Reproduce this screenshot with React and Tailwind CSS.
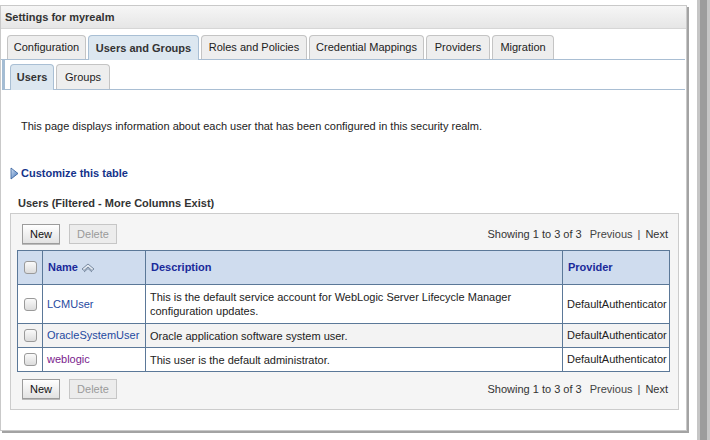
import React from "react";

const F = { fontFamily: '"Liberation Sans", Arial, sans-serif' };

function Tab({ label, selected, w, h }) {
  return (
    <div
      className={
        "flex items-center justify-center rounded-t-[4px] border border-b-0 text-[11px] " +
        (selected
          ? "bg-[#dce7f0] border-[#a9bfd4] font-bold text-[#333] -mb-px"
          : "bg-[#eeeeee] border-[#c4c4c4] text-[#222]")
      }
      style={{ width: w, height: selected ? h + 1 : h }}
    >
      {label}
    </div>
  );
}

function CheckBox() {
  return (
    <div className="w-[13px] h-[13px] rounded-[3px] border border-[#9a9a9a] bg-gradient-to-b from-[#fafafa] to-[#dcdcdc]" />
  );
}

function Btn({ label, disabled, w }) {
  return (
    <div
      className={
        "h-[20px] flex items-center justify-center text-[11px] border " +
        (disabled
          ? "bg-[#ececec] border-[#c6c6c6] text-[#9a9a9a]"
          : "bg-gradient-to-b from-[#ffffff] to-[#e2e2e2] border-[#9c9c9c] text-[#111] shadow-[0_1px_0_#bbb]")
      }
      style={{ width: w }}
    >
      {label}
    </div>
  );
}

function Toolbar() {
  return (
    <div className="flex items-center justify-between h-[20px] pl-[11px] pr-[10px]">
      <div className="flex gap-[9px]">
        <Btn label="New" w={38} />
        <Btn label="Delete" disabled w={48} />
      </div>
      <div className="text-[11px] text-[#333] flex items-center">
        <span>Showing 1 to 3 of 3</span>
        <span className="ml-[8px] text-[#444]">Previous</span>
        <span className="mx-[5px] text-[#444]">|</span>
        <span>Next</span>
      </div>
    </div>
  );
}

function SortIcon() {
  return (
    <svg width="14" height="10" viewBox="0 0 14 10" className="ml-[3px]">
      <path d="M1 6 L7 1 L13 6 L11 7.5 L7 4 L3 7.5 Z" fill="#e4eaf2" stroke="#6d7f96" strokeWidth="0.9" />
      <path d="M3 9 L7 5.5 L11 9" fill="none" stroke="#6d7f96" strokeWidth="0.9" />
    </svg>
  );
}

export default function App() {
  const rows = [
    {
      name: "LCMUser",
      desc: ["This is the default service account for WebLogic Server Lifecycle Manager", "configuration updates."],
      h: 39,
      bg: "bg-white",
      color: "text-[#1f4aa0]",
    },
    { name: "OracleSystemUser", desc: ["Oracle application software system user."], h: 24, bg: "bg-[#f3f3f3]", color: "text-[#1f4aa0]" },
    { name: "weblogic", desc: ["This user is the default administrator."], h: 24, bg: "bg-white", color: "text-[#7a1c8c]" },
  ];
  return (
    <div className="w-[710px] h-[440px] bg-white flex relative overflow-hidden" style={F}>
      <div className="mt-[5px] w-[687px] h-[426px] border border-[#c9c9c9] shadow-[2px_2px_0_#a3a3a3] bg-white flex flex-col">
        <div className="h-[23px] shrink-0 bg-gradient-to-b from-[#f6f6f6] to-[#e6e6e6] border-b border-[#d6d6d6] flex items-center pl-[4px] text-[11px] font-bold text-[#333]">
          Settings for myrealm
        </div>
        <div className="pt-[6px] pl-[6px] flex gap-[2px] items-end border-b border-[#a9bed3] mr-[1px]">
          <Tab label="Configuration" w={79} h={24} />
          <Tab label="Users and Groups" selected w={111} h={24} />
          <Tab label="Roles and Policies" w={106} h={24} />
          <Tab label="Credential Mappings" w={115} h={24} />
          <Tab label="Providers" w={64} h={24} />
          <Tab label="Migration" w={62} h={24} />
        </div>
        <div className="flex">
          <div className="ml-[1px] w-[3px] bg-[#a4bcd3]" />
          <div className="flex-1 pt-[4px] pl-[5px] flex gap-[2px] items-end border-b border-[#a9bed3] mr-[1px]">
            <Tab label="Users" selected w={44} h={25} />
            <Tab label="Groups" w={54} h={25} />
          </div>
        </div>
        <div className="mt-[30px] pl-[20px] text-[11px] leading-[13px] text-[#222]">
          This page displays information about each user that has been configured in this security realm.
        </div>
        <div className="mt-[33px] pl-[9px] flex items-center h-[14px]">
          <svg width="9" height="13" viewBox="0 0 9 13">
            <defs>
              <linearGradient id="tg" x1="0" y1="0" x2="1" y2="1">
                <stop offset="0" stopColor="#d6e4f5" />
                <stop offset="1" stopColor="#3d6fb5" />
              </linearGradient>
            </defs>
            <path d="M1 1 L8 6.5 L1 12 Z" fill="url(#tg)" stroke="#2d5a9a" strokeWidth="0.8" />
          </svg>
          <span className="ml-[2px] text-[11px] font-bold text-[#14338a]">Customize this table</span>
        </div>
        <div className="mt-[16px] pl-[17px] text-[11px] font-bold text-[#333] leading-[14px]">
          Users (Filtered - More Columns Exist)
        </div>
        <div className="mt-[3px] ml-[9px] w-[669px] h-[197px] bg-[#f5f5f5] border border-[#cccccc] pt-[10px] flex flex-col">
          <Toolbar />
          <div className="mt-[6px] ml-[6px] w-[653px] border border-[#5b7898]">
            <div className="flex h-[34px] bg-[#cfdcee] border-b border-[#5b7898] text-[11px] font-bold text-[#1a2a9a]">
              <div className="w-[25px] flex items-center justify-center border-r border-[#5b7898]">
                <CheckBox />
              </div>
              <div className="w-[103px] flex items-center pl-[5px] border-r border-[#5b7898]">
                Name
                <SortIcon />
              </div>
              <div className="w-[417px] flex items-center pl-[5px] border-r border-[#5b7898]">Description</div>
              <div className="flex-1 flex items-center pl-[5px]">Provider</div>
            </div>
            {rows.map((r, i) => (
              <div
                key={r.name}
                className={"flex text-[11px] text-[#222] " + r.bg + (i < rows.length - 1 ? " border-b border-[#5b7898]" : "")}
                style={{ height: r.h - (i < rows.length - 1 ? 0 : 1) }}
              >
                <div className="w-[25px] flex items-center justify-center border-r border-[#5b7898]">
                  <CheckBox />
                </div>
                <div className={"w-[103px] flex items-center pl-[4px] border-r border-[#5b7898] " + r.color}>{r.name}</div>
                <div className={"w-[417px] flex flex-col pl-[4px] border-r border-[#5b7898] leading-[14px] " + (r.desc.length > 1 ? "justify-start pt-[5px]" : "justify-center")}>
                  {r.desc.map((d) => (
                    <span key={d}>{d}</span>
                  ))}
                </div>
                <div className="flex-1 flex items-center pl-[4px]">DefaultAuthenticator</div>
              </div>
            ))}
          </div>
          <div className="mt-[7px]">
            <Toolbar />
          </div>
        </div>
      </div>
      <div className="absolute left-[697px] top-0 w-[3px] h-[440px] bg-[#c6c6c6]" />
      <div className="absolute left-[700px] top-0 w-[7px] h-[440px] bg-[#9c9c9c]" />
      <div className="absolute left-[707px] top-0 w-[3px] h-[440px] bg-[#c6c6c6]" />
    </div>
  );
}
